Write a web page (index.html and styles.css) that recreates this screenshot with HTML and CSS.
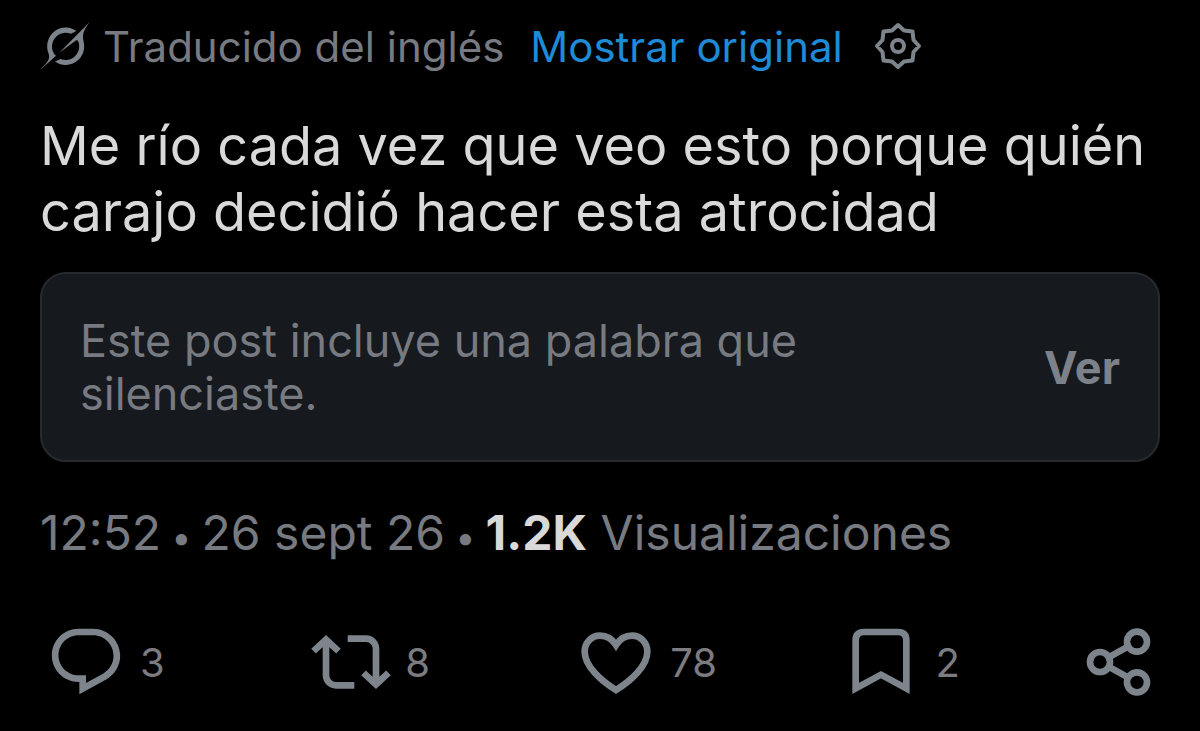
FILE: index.html
```
<!DOCTYPE html>
<html lang="es">
<head>
    <meta charset="utf-8">
    <title>Post</title>
    <link rel="stylesheet" href="styles.css">
</head>
<body>
    <article class="post">
        <div class="translation">
            <svg class="grok-icon" viewBox="0 0 33 32"><path d="M12.745 20.54l10.97-8.19c.539-.4 1.307-.244 1.564.38 1.349 3.288.746 7.241-1.938 9.955-2.683 2.714-6.417 3.31-9.83 1.954l-3.728 1.745c5.347 3.697 11.84 2.782 15.898-1.324 3.219-3.255 4.216-7.692 3.284-11.693l.008.009c-1.351-5.878.332-8.227 3.782-13.031L33 0l-4.54 4.59v-.014L12.743 20.544m-2.263 1.987c-3.837-3.707-3.175-9.446.1-12.755 2.42-2.449 6.388-3.448 9.852-1.979l3.72-1.737c-.67-.49-1.53-1.017-2.515-1.387-4.455-1.854-9.789-.931-13.41 2.728-3.483 3.523-4.579 8.94-2.697 13.561 1.405 3.454-.899 5.898-3.22 8.364C1.49 30.2.666 31.074 0 32l10.478-9.466"/></svg>
            <span class="translated">Traducido del inglés</span>
            <a href="#" class="show-original">Mostrar original</a>
            <button class="settings-button" aria-label="Ajustes de traducción">
                <svg viewBox="-24 -24 48 48"><path d="M0-21L6-15.500 14.500-14.500 15.500-6 21 0 15.500 6 14.500 14.500 6 15.500 0 21-6 15.500-14.500 14.500-15.500 6-21 0-15.500-6-14.500-14.500-6-15.500z"/><circle r="6"/></svg>
            </button>
        </div>

        <p class="post-text">Me río cada vez que veo esto porque quién carajo decidió hacer esta atrocidad</p>

        <div class="muted-post">
            <p>Este post incluye una palabra que silenciaste.</p>
            <button class="view-button">Ver</button>
        </div>

        <div class="meta">12:52<span class="dot"> • </span>26 sept 26<span class="dot"> • </span><strong>1.2K</strong> Visualizaciones</div>

        <div class="actions">
            <button class="action" aria-label="Responder">
                <svg viewBox="0 0 24 24"><path d="M1.751 10c0-4.420 3.584-8 8.005-8h4.366c4.490 0 8.129 3.640 8.129 8.130 0 2.960-1.607 5.680-4.196 7.110l-8.054 4.460v-3.690h-.067c-4.490.1-8.183-3.510-8.183-8.010zm8.005-6c-3.317 0-6.005 2.690-6.005 6 0 3.370 2.770 6.080 6.138 6.010l.351-.010h1.761v2.300l5.087-2.810c1.951-1.080 3.163-3.130 3.163-5.360 0-3.390-2.744-6.130-6.129-6.130H9.756z"/></svg>
                <span>3</span>
            </button>
            <button class="action" aria-label="Repostear">
                <svg viewBox="0 0 24 24"><path d="M4.500 3.880l4.432 4.140-1.364 1.460L5.500 7.550V16c0 1.100.896 2 2 2H13v2H7.500c-2.209 0-4-1.790-4-4V7.550L1.432 9.480.068 8.020 4.500 3.880zM16.500 6H11V4h5.500c2.209 0 4 1.790 4 4v8.450l2.068-1.930 1.364 1.460-4.432 4.140-4.432-4.140 1.364-1.460 2.068 1.930V8c0-1.100-.896-2-2-2z"/></svg>
                <span>8</span>
            </button>
            <button class="action" aria-label="Me gusta">
                <svg class="outline" viewBox="0 0 24 24"><path d="M12 20.400C7.500 17.600 2.600 13.200 2.600 8.900 2.600 6 4.800 4.100 7.200 4.100 9.300 4.100 11 5.300 12 6.900 13 5.300 14.700 4.100 16.800 4.100 19.200 4.100 21.400 6 21.400 8.900 21.400 13.200 16.500 17.600 12 20.400z"/></svg>
                <span>78</span>
            </button>
            <button class="action" aria-label="Guardar">
                <svg class="outline" viewBox="0 0 24 24"><path d="M4.400 19.900V5.500Q4.400 3 6.900 3H17.100Q19.600 3 19.600 5.500V19.900L12 15.800z"/></svg>
                <span>2</span>
            </button>
            <button class="action" aria-label="Compartir">
                <svg class="outline" viewBox="0 0 24 24"><circle cx="6" cy="12" r="3"/><circle cx="17.100" cy="5.900" r="3"/><circle cx="17.100" cy="18.100" r="3"/><path d="M8.600 10.600l5.900-3.300M8.600 13.400l5.900 3.300"/></svg>
            </button>
        </div>
    </article>
</body>
</html>
```
FILE: styles.css
```
body {
    font-family: Inter, "Liberation Sans", sans-serif;
    background: #000;
    color: #d9d9d9;
    margin: 0;
}

p {
    margin: 0;
}

button {
    font: inherit;
    color: inherit;
    background: none;
    border: none;
    padding: 0;
    cursor: pointer;
}

svg {
    display: block;
    fill: currentColor;
    flex-shrink: 0;
}

.post {
    padding: 20px 40px 0;
}

.translation {
    display: flex;
    align-items: center;
    height: 52px;
    font-size: 42px;
    color: #777b81;
}

.grok-icon {
    width: 50px;
    height: 48px;
    margin-right: 13px;
    color: #7d848b;
}

.show-original {
    color: #1d8bd8;
    text-decoration: none;
    margin-left: 26px;
}

.settings-button {
    margin-left: 31px;
    color: #7d848b;
}

.settings-button svg {
    width: 48px;
    height: 48px;
    fill: none;
    stroke: currentColor;
    stroke-width: 4;
    stroke-linejoin: round;
}

.post-text {
    font-size: 54px;
    line-height: 66px;
    margin-top: 41px;
}

.muted-post {
    display: flex;
    align-items: center;
    justify-content: space-between;
    gap: 40px;
    margin-top: 27px;
    padding: 40px 38px;
    font-size: 45px;
    line-height: 53px;
    color: #777b81;
    background: #16191d;
    border: 2px solid #272a2d;
    border-radius: 26px;
}

.muted-post p {
    max-width: 760px;
}

.view-button {
    font-weight: 700;
    color: #7d828a;
}

.meta {
    margin-top: 39px;
    font-size: 48px;
    line-height: 64px;
    color: #777b81;
}

.meta strong {
    color: #d9d9d9;
}

.meta .dot {
    font-size: 36px;
    white-space: pre;
}

.actions {
    display: grid;
    grid-template-columns: repeat(3, 10fr) 9fr 80px;
    margin-top: 53px;
    padding-left: 6px;
    color: #7d848b;
}

.action {
    display: flex;
    align-items: center;
    gap: 14px;
    font-size: 40px;
}

.action span {
    color: #7b7b80;
}

.action svg {
    width: 80px;
    height: 80px;
}

.action .outline {
    fill: none;
    stroke: currentColor;
    stroke-width: 2;
}
```
